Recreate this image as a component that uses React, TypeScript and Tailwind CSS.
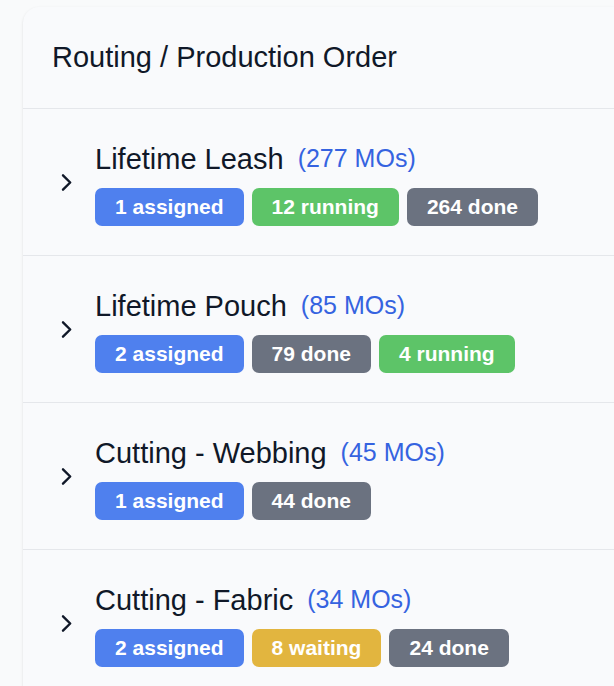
import React from "react";

type Status = "assigned" | "running" | "done" | "waiting";
type Routing = { name: string; orders: number; counts: [number, Status][] };

const badgeColors: Record<Status, string> = {
  assigned: "bg-[#4f80ee]",
  running: "bg-[#5dc468]",
  done: "bg-[#6b7280]",
  waiting: "bg-[#e2b53f]",
};

const routings: Routing[] = [
  { name: "Lifetime Leash", orders: 277, counts: [[1, "assigned"], [12, "running"], [264, "done"]] },
  { name: "Lifetime Pouch", orders: 85, counts: [[2, "assigned"], [79, "done"], [4, "running"]] },
  { name: "Cutting - Webbing", orders: 45, counts: [[1, "assigned"], [44, "done"]] },
  { name: "Cutting - Fabric", orders: 34, counts: [[2, "assigned"], [8, "waiting"], [24, "done"]] },
];

function RoutingRow({ name, orders, counts }: Routing) {
  return (
    <li className="flex items-center gap-4 border-t border-gray-200 pt-[30px] pb-[29px] pl-8">
      <button type="button" aria-label={`Expand ${name}`} className="flex size-6 shrink-0 items-center justify-center text-gray-900">
        <svg width="24" height="24" viewBox="0 0 24 24" fill="none" stroke="currentColor" strokeWidth="2.4" strokeLinecap="round" strokeLinejoin="round">
          <path d="M8 4.3l7.2 7.2L8 18.7" />
        </svg>
      </button>
      <div className="min-w-0">
        <div className="flex items-start gap-3.5 whitespace-nowrap">
          <span className="text-[29px] leading-10 text-gray-900">{name}</span>
          <a href="#" className="text-[25px] leading-[38px] text-[#3563e0]">({orders} MOs)</a>
        </div>
        <div className="mt-[9px] flex gap-2 whitespace-nowrap">
          {counts.map(([count, status]) => (
            <span key={status} className={`rounded-[7px] px-5 text-[21px] leading-[38px] font-bold text-white ${badgeColors[status]}`}>
              {count} {status}
            </span>
          ))}
        </div>
      </div>
    </li>
  );
}

export default function App() {
  return (
    <main className="min-h-screen overflow-hidden bg-[#f9fafb] pt-[7px] pl-[23px] font-['Liberation_Sans',Arial,sans-serif]">
      <section className="rounded-tl-2xl bg-[#f9fafc] shadow">
        <h1 className="px-[29px] py-8 text-[29px] leading-[37px] text-gray-900">Routing / Production Order</h1>
        <ul>
          {routings.map((routing) => (
            <RoutingRow key={routing.name} {...routing} />
          ))}
        </ul>
      </section>
    </main>
  );
}
